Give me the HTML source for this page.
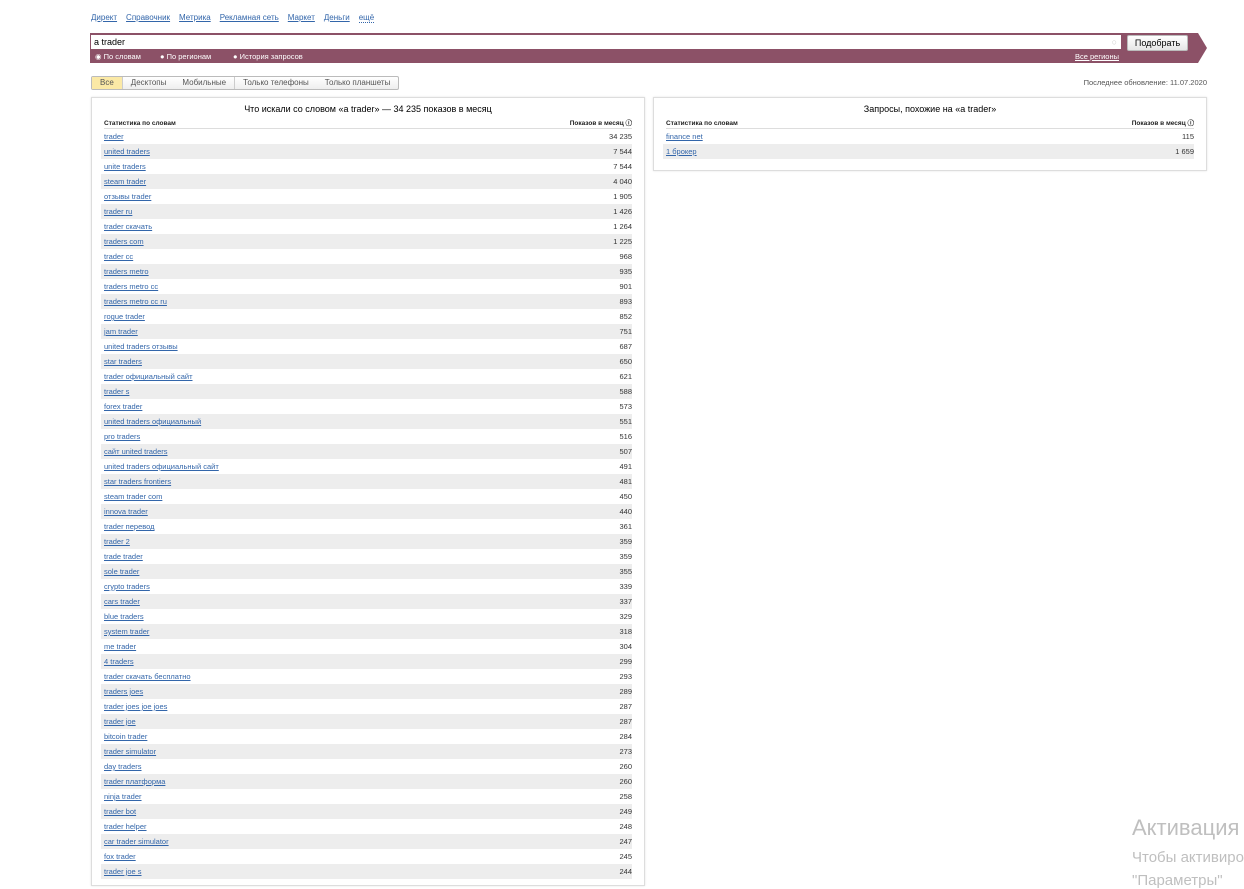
<!DOCTYPE html>
<html><head><meta charset="utf-8">
<style>
*{margin:0;padding:0;box-sizing:border-box}
body{width:1244px;height:887px;overflow:hidden;background:#fff;font-family:"Liberation Sans","DejaVu Sans",sans-serif;position:relative;color:#000}
.a{position:absolute}
.nav{left:91px;top:13px;font-size:8px;white-space:nowrap}
.nav span{color:#3366aa;text-decoration:underline;margin-right:9px}
.bar{left:90px;top:33px;width:1108px;height:30px;background:#8c5167}
.arrow{left:1198px;top:33px;width:0;height:0;border-top:15px solid transparent;border-bottom:15px solid transparent;border-left:9px solid #8c5167}
.inp{left:91px;top:35px;width:1030px;height:14px;background:#fff;font-size:9px;padding:2px 3px;line-height:10px}
.btn{left:1127px;top:35px;width:61px;height:16px;background:linear-gradient(#fff,#e6e6e6);border:1px solid #bbb;border-radius:2px;font-size:9px;text-align:center;line-height:14px}
.rad{top:52px;font-size:7.5px;color:#fff}
.tabs{left:91px;top:76px;height:14px;border:1px solid #bbb;border-radius:2px;display:flex;font-size:8px;color:#555;background:linear-gradient(#fff,#eee)}
.tabs div{padding:0 8px;line-height:12px}
.panel{border:1px solid #ddd;box-shadow:0 0 2px #e4e4e4;background:#fff}
.title{text-align:center;font-size:9px;position:absolute;left:0;right:0}
.hd{position:absolute;left:12px;right:12px;top:21px;height:10px;border-bottom:1px solid #ddd;font-size:6.5px;font-weight:bold;color:#222;line-height:9px}
.hd span{position:absolute;right:0;top:0}
.rows{position:absolute;left:9px;right:12px;top:31px}
.r{height:15px;line-height:15px;font-size:7.5px;position:relative;padding-left:3px}
.r:nth-child(even){background:#ededed}
.r u{color:#3366aa}
.r b{font-weight:normal;position:absolute;right:0;color:#333}
.wm{color:#bfbfbf;white-space:nowrap}
</style></head><body>
<div class="a nav"><span>Директ</span><span>Справочник</span><span>Метрика</span><span>Рекламная сеть</span><span>Маркет</span><span>Деньги</span><span style="border-bottom:1px dotted #36a;text-decoration:none">ещё</span></div>
<div class="a bar"></div><div class="a arrow"></div>
<div class="a inp">a trader<span style="position:absolute;right:4px;top:2px;color:#ccc">○</span></div>
<div class="a btn">Подобрать</div>
<div class="a rad" style="left:95px">◉ По словам</div>
<div class="a rad" style="left:160px">● По регионам</div>
<div class="a rad" style="left:233px">● История запросов</div>
<div class="a rad" style="left:1075px;text-decoration:underline">Все регионы</div>
<div class="a tabs"><div style="background:#fbe9a6;border-right:1px solid #ccc">Все</div><div>Десктопы</div><div style="border-right:1px solid #ccc">Мобильные</div><div>Только телефоны</div><div>Только планшеты</div></div>
<div class="a" style="right:37px;top:78px;font-size:7.5px;color:#555">Последнее обновление: 11.07.2020</div>

<div class="a panel" style="left:91px;top:97px;width:554px;height:789px">
<div class="title" style="top:6px">Что искали со словом «a trader» — 34 235 показов в месяц</div>
<div class="hd">Статистика по словам<span>Показов в месяц ⓘ</span></div>
<div class="rows" id="L"></div>
</div>
<div class="a panel" style="left:653px;top:97px;width:554px;height:74px">
<div class="title" style="top:6px">Запросы, похожие на «a trader»</div>
<div class="hd">Статистика по словам<span>Показов в месяц ⓘ</span></div>
<div class="rows"><div class="r"><u>finance net</u><b>115</b></div><div class="r"><u>1 брокер</u><b>1 659</b></div></div>
</div>
<div class="a wm" style="left:1132px;top:815px;font-size:22px">Активация</div>
<div class="a wm" style="left:1132px;top:849px;font-size:15px">Чтобы активировать</div>
<div class="a wm" style="left:1132px;top:872px;font-size:15px">"Параметры"</div>
<script>
var d=[["trader","34 235"],["united traders","7 544"],["unite traders","7 544"],["steam trader","4 040"],["отзывы trader","1 905"],["trader ru","1 426"],["trader скачать","1 264"],["traders com","1 225"],["trader cc","968"],["traders metro","935"],["traders metro cc","901"],["traders metro cc ru","893"],["rogue trader","852"],["jam trader","751"],["united traders отзывы","687"],["star traders","650"],["trader официальный сайт","621"],["trader s","588"],["forex trader","573"],["united traders официальный","551"],["pro traders","516"],["сайт united traders","507"],["united traders официальный сайт","491"],["star traders frontiers","481"],["steam trader com","450"],["innova trader","440"],["trader перевод","361"],["trader 2","359"],["trade trader","359"],["sole trader","355"],["crypto traders","339"],["cars trader","337"],["blue traders","329"],["system trader","318"],["me trader","304"],["4 traders","299"],["trader скачать бесплатно","293"],["traders joes","289"],["trader joes joe joes","287"],["trader joe","287"],["bitcoin trader","284"],["trader simulator","273"],["day traders","260"],["trader платформа","260"],["ninja trader","258"],["trader bot","249"],["trader helper","248"],["car trader simulator","247"],["fox trader","245"],["trader joe s","244"]];
var h="";d.forEach(function(x){h+='<div class="r"><u>'+x[0]+'</u><b>'+x[1]+'</b></div>'});
document.getElementById("L").innerHTML=h;
</script>
</body></html>
